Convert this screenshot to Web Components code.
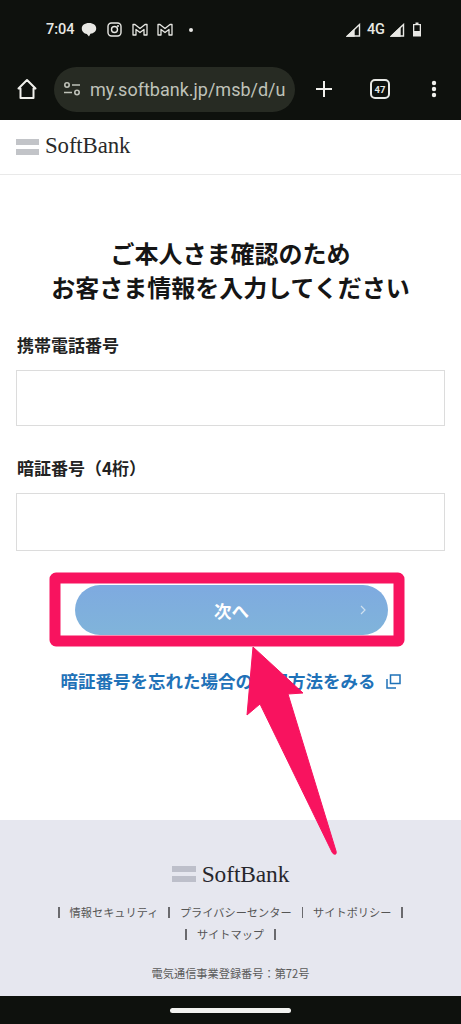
<!DOCTYPE html>
<html lang="ja">
<head>
<meta charset="utf-8">
<title>SoftBank</title>
<style>
    html, body { margin: 0; padding: 0; }
    body { font-family: "Noto Sans CJK JP", sans-serif; background: #fff; }
</style>
</head>
<body>
<app-page>
    <phone-status slot="chrome"></phone-status>
    <browser-bar slot="chrome" url="my.softbank.jp/msb/d/u" tabs="47"></browser-bar>
    <site-header slot="chrome"></site-header>

    <page-title>ご本人さま確認のため<br>お客さま情報を入力してください</page-title>
    <form-field label="携帯電話番号"></form-field>
    <form-field label="暗証番号（4桁）" class="second"></form-field>
    <next-button>次へ</next-button>
    <help-link>暗証番号を忘れた場合の確認方法をみる</help-link>

    <site-footer slot="foot"></site-footer>
    <nav-pill slot="foot"></nav-pill>
    <call-out slot="over"></call-out>
</app-page>

<script>
const sans = `"Noto Sans CJK JP", sans-serif`;

function define (name, html) {
    window.customElements.define(name, class extends HTMLElement {
        constructor(){
            super();
            const shadow = this.attachShadow({mode:'open'});
            shadow.innerHTML = typeof html === "function" ? html(this) : html;
        }
    });
}

define('app-page', `
    <style>
        :host { display: flex; flex-direction: column; position: relative; width: 461px; height: 1024px; overflow: hidden; background: #fff; }
        main { flex: 1; display: flex; flex-direction: column; padding: 61px 16px 0; }
    </style>
    <slot name="chrome"></slot>
    <main><slot></slot></main>
    <slot name="foot"></slot>
    <slot name="over"></slot>
`);

define('phone-status', `
    <style>
        :host { display: flex; align-items: center; height: 59px; padding: 0 39px 0 46px; background: #0e110d; color: #e8e8e4; font: 500 14.5px Roboto, sans-serif; }
        svg { display: block; }
        .left, .right { display: flex; align-items: center; }
        .right { margin-left: auto; }
    </style>
    <div class="left">
        <span>7:04</span>
        <svg style="margin-left:6px" width="16" height="15" viewBox="0 0 16 15" fill="#e8e8e4"><path d="M8 1C3.600 1 .800 3.300 .800 6.500s2.600 5.100 5 5.400L8 14.500l1.400-2.700C13 11.300 15.200 9.200 15.200 6.500 15.200 3.300 12.400 1 8 1z"/></svg>
        <svg style="margin-left:10px" width="15" height="15" viewBox="0 0 15 15" fill="none" stroke="#e8e8e4" stroke-width="1.400"><rect x="1" y="1" width="13" height="13" rx="3.500"/><circle cx="7.500" cy="7.500" r="3"/><circle cx="11" cy="4" r=".4"/></svg>
        <svg style="margin-left:10px" width="16" height="13" viewBox="0 0 16 13" fill="none" stroke="#e8e8e4" stroke-width="1.300" stroke-linejoin="round"><path d="M1 12V1.500h2L8 5.500l5-4h2V12h-3V6.500L8 9.500 4 6.500V12z"/></svg>
        <svg style="margin-left:9px" width="16" height="13" viewBox="0 0 16 13" fill="none" stroke="#e8e8e4" stroke-width="1.300" stroke-linejoin="round"><path d="M1 12V1.500h2L8 5.500l5-4h2V12h-3V6.500L8 9.500 4 6.500V12z"/></svg>
        <svg style="margin-left:15px" width="6" height="6" viewBox="0 0 6 6" fill="#e8e8e4"><circle cx="3" cy="3" r="2"/></svg>
    </div>
    <div class="right">
        <svg width="15" height="14" viewBox="0 0 15 14" fill="none" stroke="#e8e8e4" stroke-width="1.400"><path d="M1.500 13 13.500 1.500V13z"/><path d="M1.500 13 8 7V13z" fill="#e8e8e4"/></svg>
        <span style="margin-left:6px">4G</span>
        <svg style="margin-left:5px" width="15" height="14" viewBox="0 0 15 14" fill="none" stroke="#e8e8e4" stroke-width="1.400"><path d="M1.500 13 13.500 1.500V13z"/><path d="M1.500 13 10 5V13z" fill="#e8e8e4"/></svg>
        <svg style="margin-left:7px" width="10" height="15" viewBox="0 0 10 15"><path d="M3.500 .5h3v1.500h2.500v12.500H1V2h2.500z" fill="#e8e8e4"/><rect x="2.300" y="3.200" width="5.400" height="5.800" fill="#0e110d"/></svg>
    </div>
`);

define('browser-bar', (el) => `
    <style>
        :host { display: flex; align-items: center; height: 60px; padding-bottom: 1px; background: #0e110d; position: relative; }
        svg { display: block; flex: none; }
        .pill { display: flex; align-items: center; width: 241px; height: 45px; margin-left: 17px; border-radius: 23px; background: #272b23; box-sizing: border-box; padding-left: 9px; }
        .url { margin-left: 9px; font: 400 18px Roboto, sans-serif; color: #bfc2b9; white-space: nowrap; overflow: hidden; width: 197px; }
        .tabs { box-sizing: border-box; width: 20px; height: 20px; margin-left: 37px; border: 2px solid #e8e8e4; border-radius: 5px; display: flex; align-items: center; justify-content: center; font: 700 9.500px Roboto, sans-serif; color: #e8e8e4; }
    </style>
    <svg style="margin-left:17px" width="20" height="22" viewBox="0 0 20 22" fill="none" stroke="#f0f0ec" stroke-width="2" stroke-linejoin="round"><path d="M1.500 10.500 10 2l8.500 8.500h-2V20h-13v-9.500z"/></svg>
    <div class="pill">
        <svg width="18" height="14" viewBox="0 0 18 14" fill="none" stroke="#bfc2b9" stroke-width="1.600"><circle cx="4" cy="3" r="2.200"/><path d="M9 3h8M1 10.500h8"/><circle cx="14" cy="10.500" r="2.200"/></svg>
        <span class="url">${el.getAttribute("url")}</span>
    </div>
    <svg style="margin-left:20px" width="18" height="18" viewBox="0 0 18 18" stroke="#f0f0ec" stroke-width="2"><path d="M9 1v16M1 9h16"/></svg>
    <div class="tabs">${el.getAttribute("tabs")}</div>
    <svg style="margin-left:41px" width="6" height="18" viewBox="0 0 6 18" fill="#f0f0ec"><circle cx="3" cy="3" r="2.200"/><circle cx="3" cy="9" r="2.200"/><circle cx="3" cy="15" r="2.200"/></svg>
`);

const brand = `
    <span class="brand"><i class="bars"><b></b><b></b></i><span class="name">SoftBank</span></span>
`;
const brandCss = `
    .brand { display: flex; align-items: center; }
    .bars { display: flex; flex-direction: column; gap: 4px; }
    .bars b { display: block; width: 23px; height: 6px; background: #c2c4c8; }
    .name { margin-left: 6px; font: 400 22.800px/28px "Liberation Serif", serif; color: #2a2a2a; letter-spacing: -.1px; position: relative; top: -1px; }
`;

define('site-header', `
    <style>
        :host { display: flex; align-items: center; height: 54px; padding: 0 16px; background: #fff; border-bottom: 1px solid #e9e9e9; }
        ${brandCss}
    </style>
    ${brand}
`);

define('page-title', `
    <style>
        :host { display: block; text-align: center; font: 700 24px/33.500px ${sans}; color: #151515; }
    </style>
    <slot></slot>
`);

define('form-field', (el) => `
    <style>
        :host { display: block; margin-top: 30px; margin-left: 1px; }
        label { display: block; font: 700 17px/24px ${sans}; color: #222; }
        input { display: block; box-sizing: border-box; width: 429px; height: 56px; margin: 13px 0 0 -1px; padding: 0 10px; border: 1px solid #dcdcdc; border-radius: 0; background: #fff; outline: none; }
        :host(.second) input { height: 58px; }
    </style>
    <label>${el.getAttribute("label")}</label>
    <input type="text">
`);

define('next-button', `
    <style>
        :host { display: block; margin: 34px 0 0 59px; width: 313px; }
        button { position: relative; display: block; width: 100%; height: 50px; padding: 0; border: 0; border-radius: 25px; background: linear-gradient(#7eaae0, #80b4da); color: #fff; font: 700 17.500px ${sans}; }
        svg { position: absolute; right: 22px; top: 20px; }
    </style>
    <button><slot></slot><svg width="6" height="10" viewBox="0 0 6 10" fill="none" stroke="#cfe0ef" stroke-width="1.200"><path d="M1 1l4 4-4 4"/></svg></button>
`);

define('help-link', `
    <style>
        :host { display: flex; align-items: center; justify-content: center; margin-top: 34px; font: 700 17.500px/24px ${sans}; color: #1f72b8; white-space: nowrap; }
        svg { margin-left: 10px; flex: none; }
    </style>
    <slot></slot>
    <svg width="15" height="15" viewBox="0 0 15 15" fill="none" stroke="#1f72b8" stroke-width="1.500"><path d="M4.500 1h9.500v8.500H4.500z"/><path d="M1 5v9h9"/></svg>
`);

define('site-footer', `
    <style>
        :host { display: block; box-sizing: border-box; height: 176px; padding-top: 40px; background: #e6e7ef; font-family: ${sans}; color: #555; }
        ${brandCss}
        .brand { justify-content: center; height: 28px; }
        .bars b { width: 24px; background: #bdbfca; }
        .name { font-size: 23.400px; color: #26262c; top: 0; }
        .row { display: flex; justify-content: center; align-items: center; gap: 10px; font-size: 11.200px; line-height: 22px; white-space: nowrap; }
        .links { margin-top: 13px; }
        .row b { display: block; width: 1.500px; height: 11px; background: #6a6a6e; }
        .reg { margin-top: 20px; text-align: center; font-size: 11.200px; line-height: 16px; color: #5a5a5a; }
    </style>
    ${brand}
    <div class="links">
        <div class="row"><b></b><span>情報セキュリティ</span><b></b><span>プライバシーセンター</span><b></b><span>サイトポリシー</span><b></b></div>
        <div class="row"><b></b><span>サイトマップ</span><b></b></div>
    </div>
    <div class="reg">電気通信事業登録番号：第72号</div>
`);

define('nav-pill', `
    <style>
        :host { display: flex; align-items: center; justify-content: center; height: 28px; background: #0e110d; }
        i { display: block; width: 121px; height: 5px; border-radius: 3px; background: #f2f2f0; }
    </style>
    <i></i>
`);

// the red box and arrow drawn over the screenshot
define('call-out', `
    <style>
        :host { position: absolute; inset: 0; display: block; pointer-events: none; }
        svg { position: absolute; left: 0; top: 0; }
    </style>
    <svg width="461" height="1024" viewBox="0 0 461 1024">
        <rect x="55" y="578" width="344" height="63" fill="none" stroke="#f8135f" stroke-width="11" rx="1"/>
        <path d="M253 647 303 693 288 694 336 851Q337 855 334 854 Q333 854 332 852L260 704 247 715z" fill="#f8135f" stroke="#f8135f" stroke-linejoin="round"/>
    </svg>
`);
</script>
</body>
</html>
